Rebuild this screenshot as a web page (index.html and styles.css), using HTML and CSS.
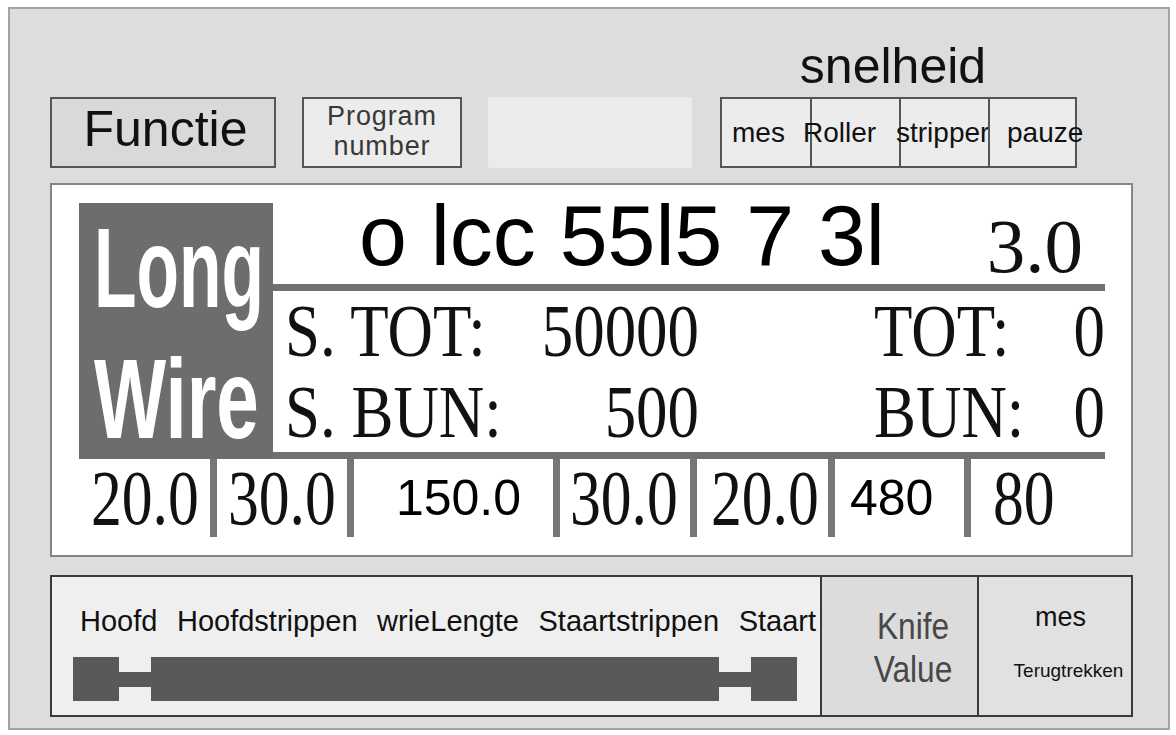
FILE: index.html
```html
<!DOCTYPE html>
<html lang="nl">
<head>
<meta charset="utf-8">
<title>Long Wire</title>
<link rel="stylesheet" href="styles.css">
</head>
<body>
<div class="panel">
  <div class="top">
    <div class="box fn">Functie</div>
    <div class="box prog"><div>Program</div><div>number</div></div>
    <div class="blank"></div>
    <div class="speed">
      <div class="speed-title">snelheid</div>
      <div class="speed-table">
        <div class="sc sc1"><span>mes</span></div>
        <div class="sc sc2"><span>Roller</span></div>
        <div class="sc sc3"><span>stripper</span></div>
        <div class="sc sc4"><span>pauze</span></div>
      </div>
    </div>
  </div>

  <div class="main">
    <div class="display">
      <div class="lw">
        <span class="lw-line lw-long">Long</span>
        <span class="lw-line lw-wire">Wire</span>
      </div>
      <div class="right">
        <div class="topline">
          <span class="code">o lcc 55l5 7 3l</span>
          <span class="speedval">3.0</span>
        </div>
        <div class="rule"></div>
        <div class="rows">
          <div class="row">
            <div class="half h1"><span class="lbl">S. TOT:</span><span class="val">50000</span></div>
            <div class="half h2"><span class="lbl">TOT:</span><span class="val">0</span></div>
          </div>
          <div class="row">
            <div class="half h1"><span class="lbl">S. BUN:</span><span class="val">500</span></div>
            <div class="half h2"><span class="lbl">BUN:</span><span class="val">0</span></div>
          </div>
        </div>
        <div class="rule"></div>
      </div>
    </div>
    <div class="values">
      <div class="v vs v0"><span>20.0</span></div>
      <div class="vd"></div>
      <div class="v vs v1"><span>30.0</span></div>
      <div class="vd"></div>
      <div class="v vn v2">150.0</div>
      <div class="vd"></div>
      <div class="v vs v3"><span>30.0</span></div>
      <div class="vd"></div>
      <div class="v vs v4"><span>20.0</span></div>
      <div class="vd"></div>
      <div class="v vn v5">480</div>
      <div class="vd"></div>
      <div class="v vs v6"><span>80</span></div>
    </div>
  </div>

  <div class="bottom">
    <div class="b-left">
      <div class="labels">
        <span>Hoofd</span>
        <span>Hoofdstrippen</span>
        <span>wrieLengte</span>
        <span>Staartstrippen</span>
        <span>Staart</span>
      </div>
      <div class="wire">
        <div class="w-end"></div>
        <div class="w-con"></div>
        <div class="w-mid"></div>
        <div class="w-con"></div>
        <div class="w-end"></div>
      </div>
    </div>
    <div class="b-knife">
      <span class="kline">Knife</span>
      <span class="kline">Value</span>
    </div>
    <div class="b-mes">
      <div class="mes1">mes</div>
      <div class="mes2">Terugtrekken</div>
    </div>
  </div>
</div>
</body>
</html>
```

FILE: styles.css
```css
body {
  margin: 0;
  background: #ffffff;
  font-family: "Liberation Sans", Arial, sans-serif;
  color: #111;
}

.panel {
  box-sizing: border-box;
  width: 1162px;
  height: 723px;
  margin: 7px 0 0 8px;
  border: 2px solid #a3a3a3;
  background: #dddddd;
  padding: 32px 0 0 40px;
}

/* ---------- top row ---------- */
.top {
  display: flex;
  align-items: flex-end;
  height: 127px;
}

.box {
  box-sizing: border-box;
  height: 71px;
  border: 2px solid #555;
}

.fn {
  width: 226px;
  background: #d9d9d9;
  font-size: 50px;
  line-height: 61px;
  padding: 0 0 6px 5px;
  text-align: center;
  color: #111;
}

.prog {
  width: 160px;
  margin-left: 26px;
  background: #ececec;
  font-size: 27px;
  line-height: 30.2px;
  letter-spacing: 0.9px;
  padding-top: 2px;
  text-align: center;
  color: #383838;
}

.blank {
  width: 204px;
  height: 71px;
  margin-left: 26px;
  background: #ebebeb;
  border-radius: 2px;
}

.speed {
  width: 357px;
  margin-left: 28px;
}

.speed-title {
  font-size: 50px;
  line-height: 50px;
  height: 50px;
  margin-bottom: 6px;
  text-align: center;
  padding-right: 11px;
  color: #111;
}

.speed-table {
  box-sizing: border-box;
  height: 71px;
  border: 2px solid #555;
  background: #ececec;
  display: flex;
}

.sc {
  box-sizing: border-box;
  height: 67px;
  font-size: 28px;
  line-height: 67px;
  white-space: nowrap;
  color: #111;
}

.sc span {
  display: inline-block;
}

.sc1 { width: 88px; }
.sc2, .sc3 { width: 89px; border-left: 2px solid #555; }
.sc4 { width: 87px; border-left: 2px solid #555; }

.sc1 span { margin-left: 10px; }
.sc2 span { margin-left: -9px; }
.sc3 span { margin-left: -5px; }
.sc4 span { margin-left: 17px; }

/* ---------- main display ---------- */
.main {
  box-sizing: border-box;
  width: 1083px;
  height: 374px;
  margin-top: 15px;
  background: #ffffff;
  border: 2px solid #858585;
  padding: 18px 26px 18px 27px;
}

.display {
  display: flex;
  height: 256px;
}

.lw {
  box-sizing: border-box;
  width: 194px;
  flex: none;
  background: #6d6d6d;
  color: #ffffff;
  font-weight: bold;
  font-size: 114px;
  line-height: 131px;
  padding-left: 15px;
}

.lw-line {
  display: block;
  white-space: nowrap;
  transform-origin: left center;
}

.lw-long {
  margin-top: -1px;
  transform: scaleX(0.61);
}

.lw-wire {
  transform: scaleX(0.67);
}

.right {
  width: 832px;
  display: flex;
  flex-direction: column;
}

.topline {
  height: 81px;
  flex: none;
  display: flex;
  align-items: flex-start;
}

.code {
  font-size: 86px;
  line-height: 62px;
  padding-left: 86px;
  margin-top: 1px;
  white-space: nowrap;
  color: #000;
}

.speedval {
  margin-left: auto;
  margin-right: 22px;
  margin-top: 12px;
  font-family: "Liberation Serif", "Times New Roman", serif;
  font-size: 77px;
  line-height: 62px;
  color: #111;
}

.rule {
  height: 7px;
  flex: none;
  background: #707070;
}

.rows {
  height: 161px;
  flex: none;
}

.row {
  display: flex;
  height: 81px;
  font-family: "Liberation Serif", "Times New Roman", serif;
  font-size: 74px;
  line-height: 81px;
  color: #111;
}

.half {
  box-sizing: border-box;
  display: grid;
}

.h1 { width: 426px; padding-left: 12px; }
.h2 { width: 406px; padding-left: 175px; }

.half span {
  grid-area: 1 / 1;
  display: inline-block;
  white-space: nowrap;
}

.lbl {
  justify-self: start;
  transform: scaleX(0.85);
  transform-origin: left center;
}

.val {
  justify-self: end;
  transform: scaleX(0.85);
  transform-origin: right center;
}

/* ---------- value strip ---------- */
.values {
  display: grid;
  grid-template-columns: 131px 7px 130px 7px 199px 7px 130px 7px 131px 7px 129px 7px 134px;
  height: 78px;
}

.vd {
  background: #777777;
}

.v {
  white-space: nowrap;
}

.vs {
  font-family: "Liberation Serif", "Times New Roman", serif;
  font-size: 78px;
  line-height: 78px;
  color: #111;
}

.vs span {
  display: inline-block;
  transform: scaleX(0.79);
  transform-origin: left center;
}

.vn {
  font-size: 50px;
  line-height: 78px;
  color: #000;
}

.v0 { padding-left: 12px; }
.v1 { padding-left: 11px; }
.v2 { padding-left: 10px; text-align: center; }
.v3 { padding-left: 10px; }
.v4 { padding-left: 14px; }
.v5 { padding-left: 15px; }
.v6 { padding-left: 22px; }

/* ---------- bottom panel ---------- */
.bottom {
  box-sizing: border-box;
  display: flex;
  width: 1083px;
  height: 142px;
  margin-top: 18px;
  border: 2px solid #3a3a3a;
}

.b-left {
  box-sizing: border-box;
  width: 770px;
  flex: none;
  border-right: 2px solid #3a3a3a;
  background: #efefef;
  padding-top: 28px;
}

.labels {
  display: flex;
  justify-content: space-between;
  font-size: 29px;
  line-height: 32px;
  margin: 0 4px 0 28px;
  white-space: nowrap;
  color: #111;
}

.wire {
  display: flex;
  align-items: center;
  height: 44px;
  margin: 20px 0 0 21px;
}

.w-end {
  width: 46px;
  height: 44px;
  background: #5a5959;
}

.w-con {
  width: 32px;
  height: 15px;
  background: #5a5959;
}

.w-mid {
  width: 568px;
  height: 44px;
  background: #5a5959;
}

.b-knife {
  box-sizing: border-box;
  width: 157px;
  flex: none;
  border-right: 2px solid #3a3a3a;
  background: #dcdcdc;
  padding: 28px 0 0 27px;
  text-align: center;
  font-size: 36px;
  line-height: 43px;
  color: #474747;
}

.kline {
  display: block;
  transform: scaleX(0.88);
}

.b-mes {
  flex: 1;
  background: #e1e1e1;
  text-align: center;
  padding-top: 25px;
  color: #111;
}

.mes1 {
  font-size: 27px;
  line-height: 30px;
  padding-left: 11px;
}

.mes2 {
  font-size: 19px;
  line-height: 20px;
  margin-top: 29px;
  padding-left: 27px;
  white-space: nowrap;
}
```
